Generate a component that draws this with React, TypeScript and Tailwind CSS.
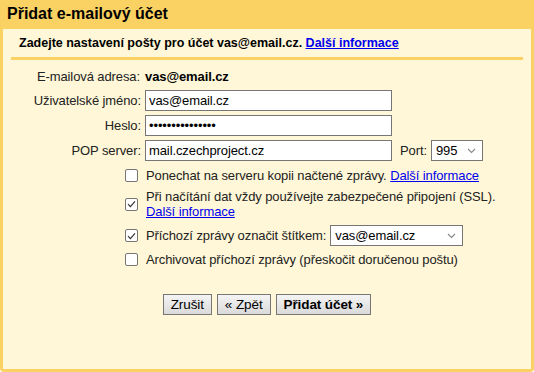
import React from "react";

const font = "font-['Liberation_Sans',Arial,sans-serif]";

function Check({ checked }: { checked?: boolean }) {
  return (
    <span className="inline-flex h-[13px] w-[13px] shrink-0 items-center justify-center rounded-[2px] border border-[#767676] bg-white">
      {checked && (
        <svg width="9" height="8" viewBox="0 0 9 8" fill="none">
          <path d="M1 4.2 L3.4 6.6 L8 1.4" stroke="#333" strokeWidth="1.2" />
        </svg>
      )}
    </span>
  );
}

function Select({ value, className }: { value: string; className: string }) {
  return (
    <div
      className={`flex h-[21px] items-center justify-between border border-[#767676] bg-white pl-[4px] pr-[6px] text-[13px] text-black ${className}`}
    >
      <span>{value}</span>
      <svg width="9" height="6" viewBox="0 0 9 6" fill="none">
        <path d="M1 1 L4.5 4.5 L8 1" stroke="#888" strokeWidth="1.1" />
      </svg>
    </div>
  );
}

function Link({ children }: { children: React.ReactNode }) {
  return <a className="cursor-pointer text-[#0000ee] underline">{children}</a>;
}

function Button({ children, bold }: { children: React.ReactNode; bold?: boolean }) {
  return (
    <button
      type="button"
      className={`h-[21px] border border-[#767676] bg-gradient-to-b from-[#f4f4f4] to-[#dadada] px-[7px] text-[13.5px] leading-none tracking-[-0.1px] text-black ${bold ? "font-bold" : ""}`}
    >
      {children}
    </button>
  );
}

const inputCls =
  "h-[21px] w-[247px] border border-[#767676] bg-white px-[3px] text-[13px] tracking-[-0.1px] text-black outline-none";

export default function App() {
  return (
    <div className={`${font} flex h-[372px] w-[534px] flex-col rounded-b-[4px] bg-[#fad163] text-black`}>
      <div className="flex h-[29px] items-center px-[7px] pb-[1px] text-[16px] font-bold">
        Přidat e-mailový účet
      </div>

      <div className="mx-[3px] mb-[3px] flex-1 bg-[#fff7d7]">
        <div className="mx-[8px] flex h-[31px] items-center border-b-[3px] border-[#fad163] px-[8px] text-[12.5px] font-bold">
          Zadejte nastavení pošty pro účet vas@email.cz.&nbsp;<Link>Další informace</Link>
        </div>

        <div className="mt-[7px] grid grid-cols-[138px_1fr] items-center gap-x-[4px] gap-y-[4px] text-[13px] tracking-[-0.1px] text-[#222]">
          <div className="pr-[1px] text-right leading-[19px]">E-mailová adresa:</div>
          <div className="font-bold leading-[19px] text-black">vas@email.cz</div>

          <div className="text-right">Uživatelské jméno:</div>
          <input readOnly defaultValue="vas@email.cz" className={inputCls} />

          <div className="text-right">Heslo:</div>
          <input readOnly type="password" defaultValue="tajneheslo12345" className={inputCls} />

          <div className="text-right">POP server:</div>
          <div className="flex items-center">
            <input readOnly defaultValue="mail.czechproject.cz" className={inputCls} />
            <span className="ml-[8px] mr-[4px]">Port:</span>
            <Select value="995" className="w-[52px]" />
          </div>
        </div>

        <div className="mt-[7px] flex flex-col gap-y-[6px] pl-[122px] text-[13px] tracking-[-0.1px] text-[#222]">
          <div className="flex items-center gap-x-[8px] leading-[15px]">
            <Check />
            <span>
              Ponechat na serveru kopii načtené zprávy. <Link>Další informace</Link>
            </span>
          </div>
          <div className="flex items-center gap-x-[8px] leading-[15px]">
            <Check checked />
            <span>
              Při načítání dat vždy používejte zabezpečené připojení (SSL).
              <br />
              <Link>Další informace</Link>
            </span>
          </div>
          <div className="flex items-center gap-x-[8px]">
            <Check checked />
            <span>Příchozí zprávy označit štítkem:</span>
            <Select value="vas@email.cz" className="-ml-[4px] w-[133px]" />
          </div>
          <div className="flex items-center gap-x-[8px] leading-[15px]">
            <Check />
            <span>Archivovat příchozí zprávy (přeskočit doručenou poštu)</span>
          </div>
        </div>

        <div className="mt-[27px] flex justify-center gap-x-[5px]">
          <Button>Zrušit</Button>
          <Button>« Zpět</Button>
          <Button bold>Přidat účet »</Button>
        </div>
      </div>
    </div>
  );
}
